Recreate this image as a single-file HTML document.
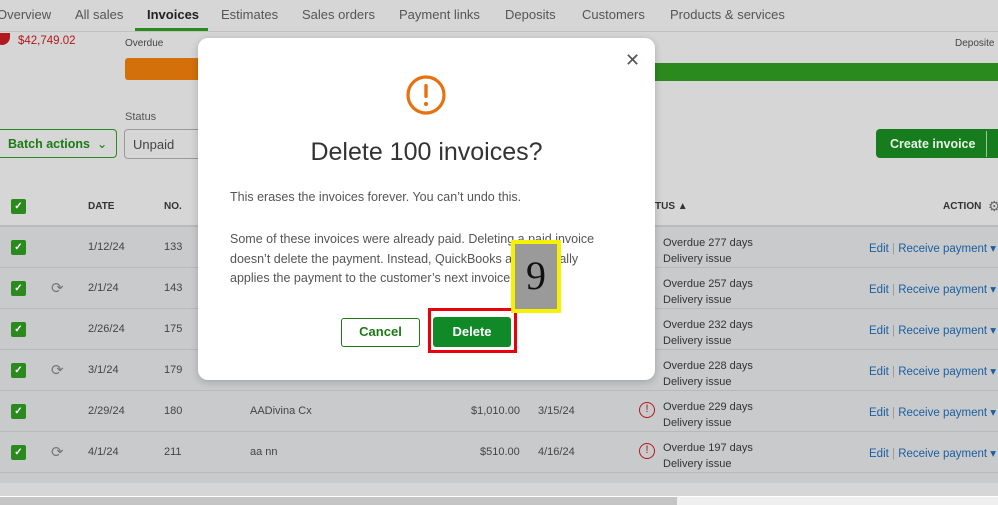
<!DOCTYPE html>
<html><head><meta charset="utf-8"><style>
*{margin:0;padding:0;box-sizing:border-box}
body{width:998px;height:505px;overflow:hidden;background:#d6d6d6;font-family:"Liberation Sans",sans-serif;position:relative;color:#333}
.a{position:absolute;white-space:nowrap}
.nav{font-size:13px;color:#555;top:7px}
.row{position:absolute;left:0;width:998px;height:41px;background:#c9cacc;border-bottom:1px solid #b8b9bb;font-size:11px;color:#444}
.cb{position:absolute;left:11px;top:13px;width:15px;height:15px;background:#2b8a1e;border-radius:2px;color:#fff;font-size:10px;text-align:center;line-height:15px;font-weight:bold}
.st{position:absolute;left:663px;top:8px;font-size:11px;color:#333;line-height:16px;white-space:nowrap}
.act{position:absolute;left:869px;top:14px;font-size:11.5px;color:#1a5fa0;white-space:nowrap}
</style></head><body>
<div class="a nav" style="left:-3px">Overview</div>
<div class="a nav" style="left:75px">All sales</div>
<div class="a nav" style="left:147px;color:#222;font-weight:bold">Invoices</div>
<div class="a nav" style="left:221px">Estimates</div>
<div class="a nav" style="left:302px">Sales orders</div>
<div class="a nav" style="left:399px">Payment links</div>
<div class="a nav" style="left:505px">Deposits</div>
<div class="a nav" style="left:582px">Customers</div>
<div class="a nav" style="left:670px">Products &amp; services</div>
<div class="a" style="left:135px;top:28px;width:73px;height:3px;background:#2b8a1e"></div>
<div class="a" style="left:0;top:31px;width:998px;height:1px;background:#c2c2c2"></div>
<div class="a" style="left:-6px;top:33px;width:16px;height:12px;background:#b0191e;border-radius:0 0 8px 8px"></div>
<div class="a" style="left:18px;top:35px;font-size:11.5px;color:#b0191e">$42,749.02</div>
<div class="a" style="left:125px;top:38px;font-size:10px;color:#444">Overdue</div>
<div class="a" style="left:125px;top:58px;width:80px;height:22px;background:#d4700a;border-radius:3px"></div>
<div class="a" style="left:955px;top:38px;font-size:10px;color:#444">Deposite</div>
<div class="a" style="left:640px;top:63px;width:358px;height:18px;background:#2b8a1e"></div>
<div class="a" style="left:125px;top:111px;font-size:11px;color:#555">Status</div>
<div class="a" style="left:-5px;top:129px;width:122px;height:29px;border:1px solid #2b8a1e;border-radius:4px;font-size:12.5px;font-weight:bold;color:#1e7a17;padding:6px 0 0 12px">Batch actions &nbsp;<span style="font-weight:normal">&#8964;</span></div>
<div class="a" style="left:124px;top:129px;width:90px;height:30px;border:1px solid #999;border-radius:4px;font-size:13px;color:#444;padding:7px 0 0 8px">Unpaid</div>
<div class="a" style="left:876px;top:129px;width:130px;height:29px;background:#167c1d;border-radius:4px;font-size:12.5px;font-weight:bold;color:#e8f3e6;padding:8px 0 0 14px">Create invoice</div>
<div class="a" style="left:986px;top:131px;width:1px;height:26px;background:#9bc99a"></div>
<div class="a" style="left:0;top:225px;width:998px;height:2px;background:#bbb"></div>
<div class="cb" style="top:199px">&#10003;</div>
<div class="a" style="left:88px;top:201px;font-size:10px;font-weight:bold;color:#333">DATE</div>
<div class="a" style="left:164px;top:201px;font-size:10px;font-weight:bold;color:#333">NO.</div>
<div class="a" style="left:655px;top:201px;font-size:10px;font-weight:bold;color:#333">TUS ▲</div>
<div class="a" style="left:943px;top:201px;font-size:10px;font-weight:bold;color:#333">ACTION</div>
<div class="a" style="left:988px;top:198px;font-size:14px;color:#666">⚙</div>

<div class="row" style="top:227px"><div class="cb">✓</div><div class="a" style="left:88px;top:14px">1/12/24</div><div class="a" style="left:164px;top:14px">133</div><div class="st">Overdue 277 days<br>Delivery issue</div><div class="act">Edit <span style="color:#999">|</span> Receive payment <span>▾</span></div></div>
<div class="row" style="top:268px"><div class="cb">✓</div><div class="a" style="left:51px;top:11px;font-size:15px;color:#777">⟳</div><div class="a" style="left:88px;top:14px">2/1/24</div><div class="a" style="left:164px;top:14px">143</div><div class="st">Overdue 257 days<br>Delivery issue</div><div class="act">Edit <span style="color:#999">|</span> Receive payment <span>▾</span></div></div>
<div class="row" style="top:309px"><div class="cb">✓</div><div class="a" style="left:88px;top:14px">2/26/24</div><div class="a" style="left:164px;top:14px">175</div><div class="st">Overdue 232 days<br>Delivery issue</div><div class="act">Edit <span style="color:#999">|</span> Receive payment <span>▾</span></div></div>
<div class="row" style="top:350px"><div class="cb">✓</div><div class="a" style="left:51px;top:11px;font-size:15px;color:#777">⟳</div><div class="a" style="left:88px;top:14px">3/1/24</div><div class="a" style="left:164px;top:14px">179</div><div class="st">Overdue 228 days<br>Delivery issue</div><div class="act">Edit <span style="color:#999">|</span> Receive payment <span>▾</span></div></div>
<div class="row" style="top:391px"><div class="cb">✓</div><div class="a" style="left:88px;top:14px">2/29/24</div><div class="a" style="left:164px;top:14px">180</div><div class="a" style="left:250px;top:14px">AADivina Cx</div><div class="a" style="left:471px;top:14px">$1,010.00</div><div class="a" style="left:538px;top:14px">3/15/24</div><div class="a" style="left:639px;top:11px;width:16px;height:16px;border:1.5px solid #b0191e;border-radius:50%;color:#b0191e;font-size:11px;text-align:center;line-height:13px">!</div><div class="st">Overdue 229 days<br>Delivery issue</div><div class="act">Edit <span style="color:#999">|</span> Receive payment <span>▾</span></div></div>
<div class="row" style="top:432px"><div class="cb">✓</div><div class="a" style="left:51px;top:11px;font-size:15px;color:#777">⟳</div><div class="a" style="left:88px;top:14px">4/1/24</div><div class="a" style="left:164px;top:14px">211</div><div class="a" style="left:250px;top:14px">aa nn</div><div class="a" style="left:480px;top:14px">$510.00</div><div class="a" style="left:538px;top:14px">4/16/24</div><div class="a" style="left:639px;top:11px;width:16px;height:16px;border:1.5px solid #b0191e;border-radius:50%;color:#b0191e;font-size:11px;text-align:center;line-height:13px">!</div><div class="st">Overdue 197 days<br>Delivery issue</div><div class="act">Edit <span style="color:#999">|</span> Receive payment <span>▾</span></div></div>
<div class="a" style="left:0;top:473px;width:998px;height:10px;background:#c9cacc"></div>
<div class="a" style="left:0;top:483px;width:998px;height:13px;background:#d6d6d6"></div>
<div class="a" style="left:0;top:496px;width:998px;height:1px;background:#fff"></div>
<div class="a" style="left:0;top:497px;width:677px;height:8px;background:#c4c4c4"></div>
<div class="a" style="left:677px;top:497px;width:321px;height:8px;background:#efefef"></div>

<div class="a" style="left:198px;top:38px;width:457px;height:342px;background:#fff;border-radius:10px;box-shadow:0 2px 8px rgba(0,0,0,.2)"></div>
<div class="a" style="left:625px;top:50px;font-size:18px;color:#555">✕</div>
<svg class="a" style="left:405px;top:74px" width="42" height="42" viewBox="0 0 42 42"><circle cx="21" cy="21" r="18" fill="none" stroke="#e8700f" stroke-width="3.2"/><rect x="19.3" y="10" width="3.4" height="14" rx="1.5" fill="#e8700f"/><circle cx="21" cy="30" r="2.1" fill="#e8700f"/></svg>
<div class="a" style="left:198px;width:457px;text-align:center;top:138px;font-size:25px;color:#333">Delete 100 invoices?</div>
<div class="a" style="left:230px;top:190px;font-size:12.5px;color:#555">This erases the invoices forever. You can’t undo this.</div>
<div class="a" style="left:230px;top:230px;font-size:12.5px;color:#555;line-height:19.5px">Some of these invoices were already paid. Deleting a paid invoice<br>doesn’t delete the payment. Instead, QuickBooks automatically<br>applies the payment to the customer’s next invoice.</div>
<div class="a" style="left:341px;top:318px;width:79px;height:29px;border:1.5px solid #1e7a17;border-radius:3px;color:#1e7a17;font-size:13px;font-weight:bold;text-align:center;line-height:26px">Cancel</div>
<div class="a" style="left:428px;top:308px;width:89px;height:45px;border:3px solid #e8000b"></div>
<div class="a" style="left:433px;top:317px;width:78px;height:30px;background:#108a27;border-radius:3px;color:#fff;font-size:13px;font-weight:bold;text-align:center;line-height:30px">Delete</div>
<div class="a" style="left:511px;top:240px;width:50px;height:73px;background:#9a9a9a;border:4px solid #f5f200;font-family:'Liberation Serif',serif;font-size:40px;color:#111;text-align:center;line-height:64px">9</div>
</body></html>
